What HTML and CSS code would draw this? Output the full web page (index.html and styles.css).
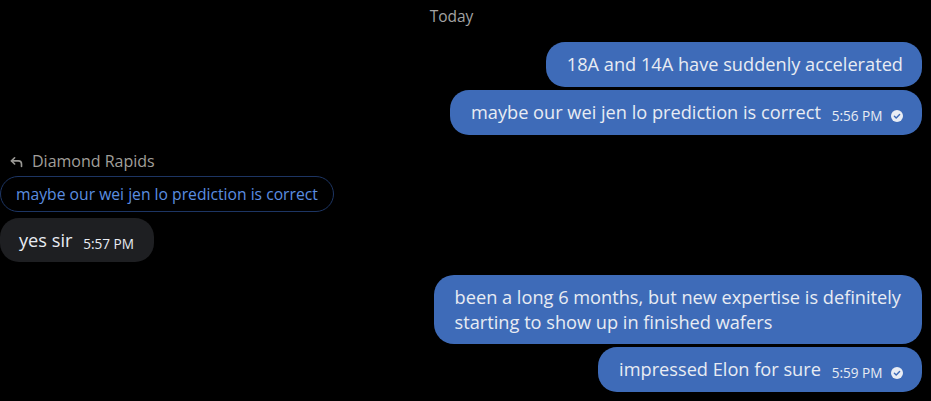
FILE: index.html
```html
<!DOCTYPE html>
<html lang="en">
<head>
    <meta charset="UTF-8">
    <meta name="viewport" content="width=device-width, initial-scale=1.0">
    <title>Chat</title>
    <link rel="stylesheet" href="styles.css">
</head>
<body>
    <div class="chat">
        <div class="day">Today</div>

        <div class="row out">
            <div class="bubble">18A and 14A have suddenly accelerated</div>
        </div>
        <div class="row out tight">
            <div class="bubble">maybe our wei jen lo prediction is correct
                <span class="meta">5:56 PM
                    <svg class="read" viewBox="0 0 12 12" width="12" height="12"><circle cx="6" cy="6" r="6" fill="#e9edf4"/><path d="M3.4 6.2 5.2 8 8.6 4.4" fill="none" stroke="#3e6bb8" stroke-width="1.4" stroke-linecap="round" stroke-linejoin="round"/></svg>
                </span>
            </div>
        </div>

        <div class="reply-to">
            <svg class="reply-icon" viewBox="0 0 24 24" width="15" height="15"><polyline points="9 16 4 11 9 6" fill="none" stroke="currentColor" stroke-width="2.6" stroke-linecap="round" stroke-linejoin="round"/><path d="M20 20v-4a5 5 0 0 0-5-5H4" fill="none" stroke="currentColor" stroke-width="2.6" stroke-linecap="round"/></svg>
            Diamond Rapids
        </div>
        <div class="row in">
            <div class="quote">maybe our wei jen lo prediction is correct</div>
        </div>
        <div class="row in quoted">
            <div class="bubble dark">yes sir <span class="meta">5:57 PM</span></div>
        </div>

        <div class="row out gap">
            <div class="bubble">been a long 6 months, but new expertise is definitely<br>starting to show up in finished wafers</div>
        </div>
        <div class="row out tight">
            <div class="bubble">impressed Elon for sure
                <span class="meta">5:59 PM
                    <svg class="read" viewBox="0 0 12 12" width="12" height="12"><circle cx="6" cy="6" r="6" fill="#e9edf4"/><path d="M3.4 6.2 5.2 8 8.6 4.4" fill="none" stroke="#3e6bb8" stroke-width="1.4" stroke-linecap="round" stroke-linejoin="round"/></svg>
                </span>
            </div>
        </div>
    </div>
</body>
</html>
```

FILE: styles.css
```css
/* chat view */
body {
    margin: 0;
    background-color: #000;
    font-family: 'Open Sans', 'Liberation Sans', sans-serif;
    color: #e8ecf3;
}
.chat {
    display: flex;
    flex-direction: column;
    padding: 0 9px 10px 0;
}
.day {
    text-align: center;
    font-size: 15.5px;
    line-height: 18px;
    color: #a3a3a3;
    padding: 7px 19px 0 0;
    margin-bottom: 17px;
}
.row {
    display: flex;
}
.row.out {
    justify-content: flex-end;
}
.row.tight {
    margin-top: 3px;
}
.row.gap {
    margin-top: 13px;
}
.bubble {
    background-color: #3e6bb8;
    border-radius: 19px;
    padding: 11px 19px 11px 21px;
    font-size: 18.2px;
    line-height: 23px;
}
.row.gap .bubble {
    line-height: 25px;
    padding: 10px 21px 9px 21px;
    border-radius: 20px;
}
.bubble.dark {
    background-color: #1e1f22;
    padding: 11px 20px 10px 19px;
}
.meta {
    font-size: 13.6px;
    line-height: 13px;
    margin-left: 6px;
    vertical-align: -2px;
    white-space: nowrap;
}
.read {
    margin-left: 5px;
    vertical-align: -1px;
}
.reply-to {
    display: flex;
    align-items: center;
    gap: 8px;
    margin-top: 16px;
    padding-left: 9px;
    font-size: 16px;
    line-height: 20px;
    color: #a09f9a;
}
.reply-icon {
    color: #9a9995;
}
.quote {
    margin-top: 5px;
    border: 1px solid #1d3563;
    border-radius: 18px;
    padding: 7px 15px 7px 15px;
    font-size: 15.7px;
    line-height: 20px;
    color: #5b8ee0;
}
.row.quoted {
    margin-top: 6px;
}
```
